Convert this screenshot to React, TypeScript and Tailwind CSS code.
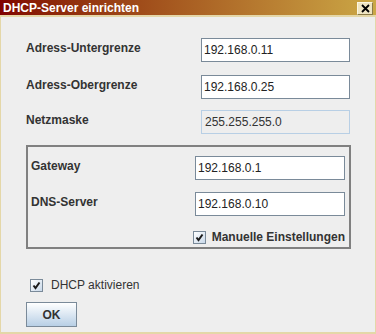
const font = { fontFamily: '"Liberation Sans", Arial, sans-serif' }

function CheckBox() {
  return (
    <span className="flex h-[13px] w-[13px] shrink-0 items-center justify-center border border-[#7a8a99] bg-linear-to-br from-white to-[#c9d9ea]">
      <svg width="9" height="9" viewBox="0 0 9 9">
        <path d="M1.5 4.5 L3.5 7 L7.5 1.5" fill="none" stroke="#1a1a1a" strokeWidth="2" />
      </svg>
    </span>
  )
}

function Field({ value, disabled }: { value: string; disabled?: boolean }) {
  return (
    <div
      className={
        disabled
          ? "flex h-[24px] items-center border border-[#b8cfe5] bg-[#eeeeee] pl-[3px] text-[12px] text-[#333333]"
          : "flex h-[24px] items-center border border-[#7a8a99] bg-white pl-[2px] text-[12px] text-[#222222]"
      }
    >
      {value}
    </div>
  )
}

function Row({ label, value, disabled, labelWidth, fieldWidth, className }: {
  label: string
  value: string
  disabled?: boolean
  labelWidth: string
  fieldWidth: string
  className?: string
}) {
  return (
    <div className={"flex items-center " + (className ?? "")}>
      <span className={labelWidth + " mb-[4px] text-[12px] font-bold text-[#333333]"}>{label}</span>
      <div className={fieldWidth}>
        <Field value={value} disabled={disabled} />
      </div>
    </div>
  )
}

export default function App() {
  return (
    <div className="flex h-[334px] w-[376px] flex-col bg-[#e4d7a8]" style={font}>
      <div className="flex h-[15px] items-center justify-between bg-linear-to-r from-[#800000] to-[#cba846] pl-[3px] pr-[3px]">
        <span className="text-[12px] font-bold leading-none text-white">DHCP-Server einrichten</span>
        <span className="mt-[1px] flex h-[13px] w-[16px] items-center justify-center border border-t-[#fbf6e2] border-l-[#fbf6e2] border-r-[#8a7a48] border-b-[#8a7a48] bg-[#efe5c2]">
          <svg width="9" height="9" viewBox="0 0 9 9">
            <path d="M1 1 L8 8 M8 1 L1 8" stroke="#000" strokeWidth="1.8" />
          </svg>
        </span>
      </div>
      <div className="mx-[1px] mb-[2px] mt-[2px] flex flex-1 flex-col bg-[#eeeeee] pl-[25px] pt-[21px]">
        <Row label="Adress-Untergrenze" value="192.168.0.11" labelWidth="w-[175px]" fieldWidth="w-[149px]" />
        <Row label="Adress-Obergrenze" value="192.168.0.25" labelWidth="w-[175px]" fieldWidth="w-[149px]" className="mt-[13px]" />
        <Row label="Netzmaske" value="255.255.255.0" disabled labelWidth="w-[175px]" fieldWidth="w-[149px]" className="mt-[11px]" />

        <div className="mt-[11px] flex h-[104px] w-[325px] flex-col border-2 border-[#808080] pl-[3px] pr-[4px] pt-[9px]">
          <Row label="Gateway" value="192.168.0.1" labelWidth="w-[164px]" fieldWidth="w-[150px]" />
          <Row label="DNS-Server" value="192.168.0.10" labelWidth="w-[164px]" fieldWidth="w-[150px]" className="mt-[12px]" />
          <div className="mt-[12px] flex items-center justify-end gap-[6px]">
            <CheckBox />
            <span className="text-[12px] font-bold text-[#333333]">Manuelle Einstellungen</span>
          </div>
        </div>

        <div className="ml-[4px] mt-[27px] flex items-center gap-[8px]">
          <CheckBox />
          <span className="text-[12px] text-[#333333]">DHCP aktivieren</span>
        </div>

        <button className="mt-[8px] flex h-[25px] w-[51px] items-center justify-center border border-[#7a8a99] bg-linear-to-b from-white to-[#b8cfe5] text-[12px] font-bold text-[#333333]">
          OK
        </button>
      </div>
    </div>
  )
}
